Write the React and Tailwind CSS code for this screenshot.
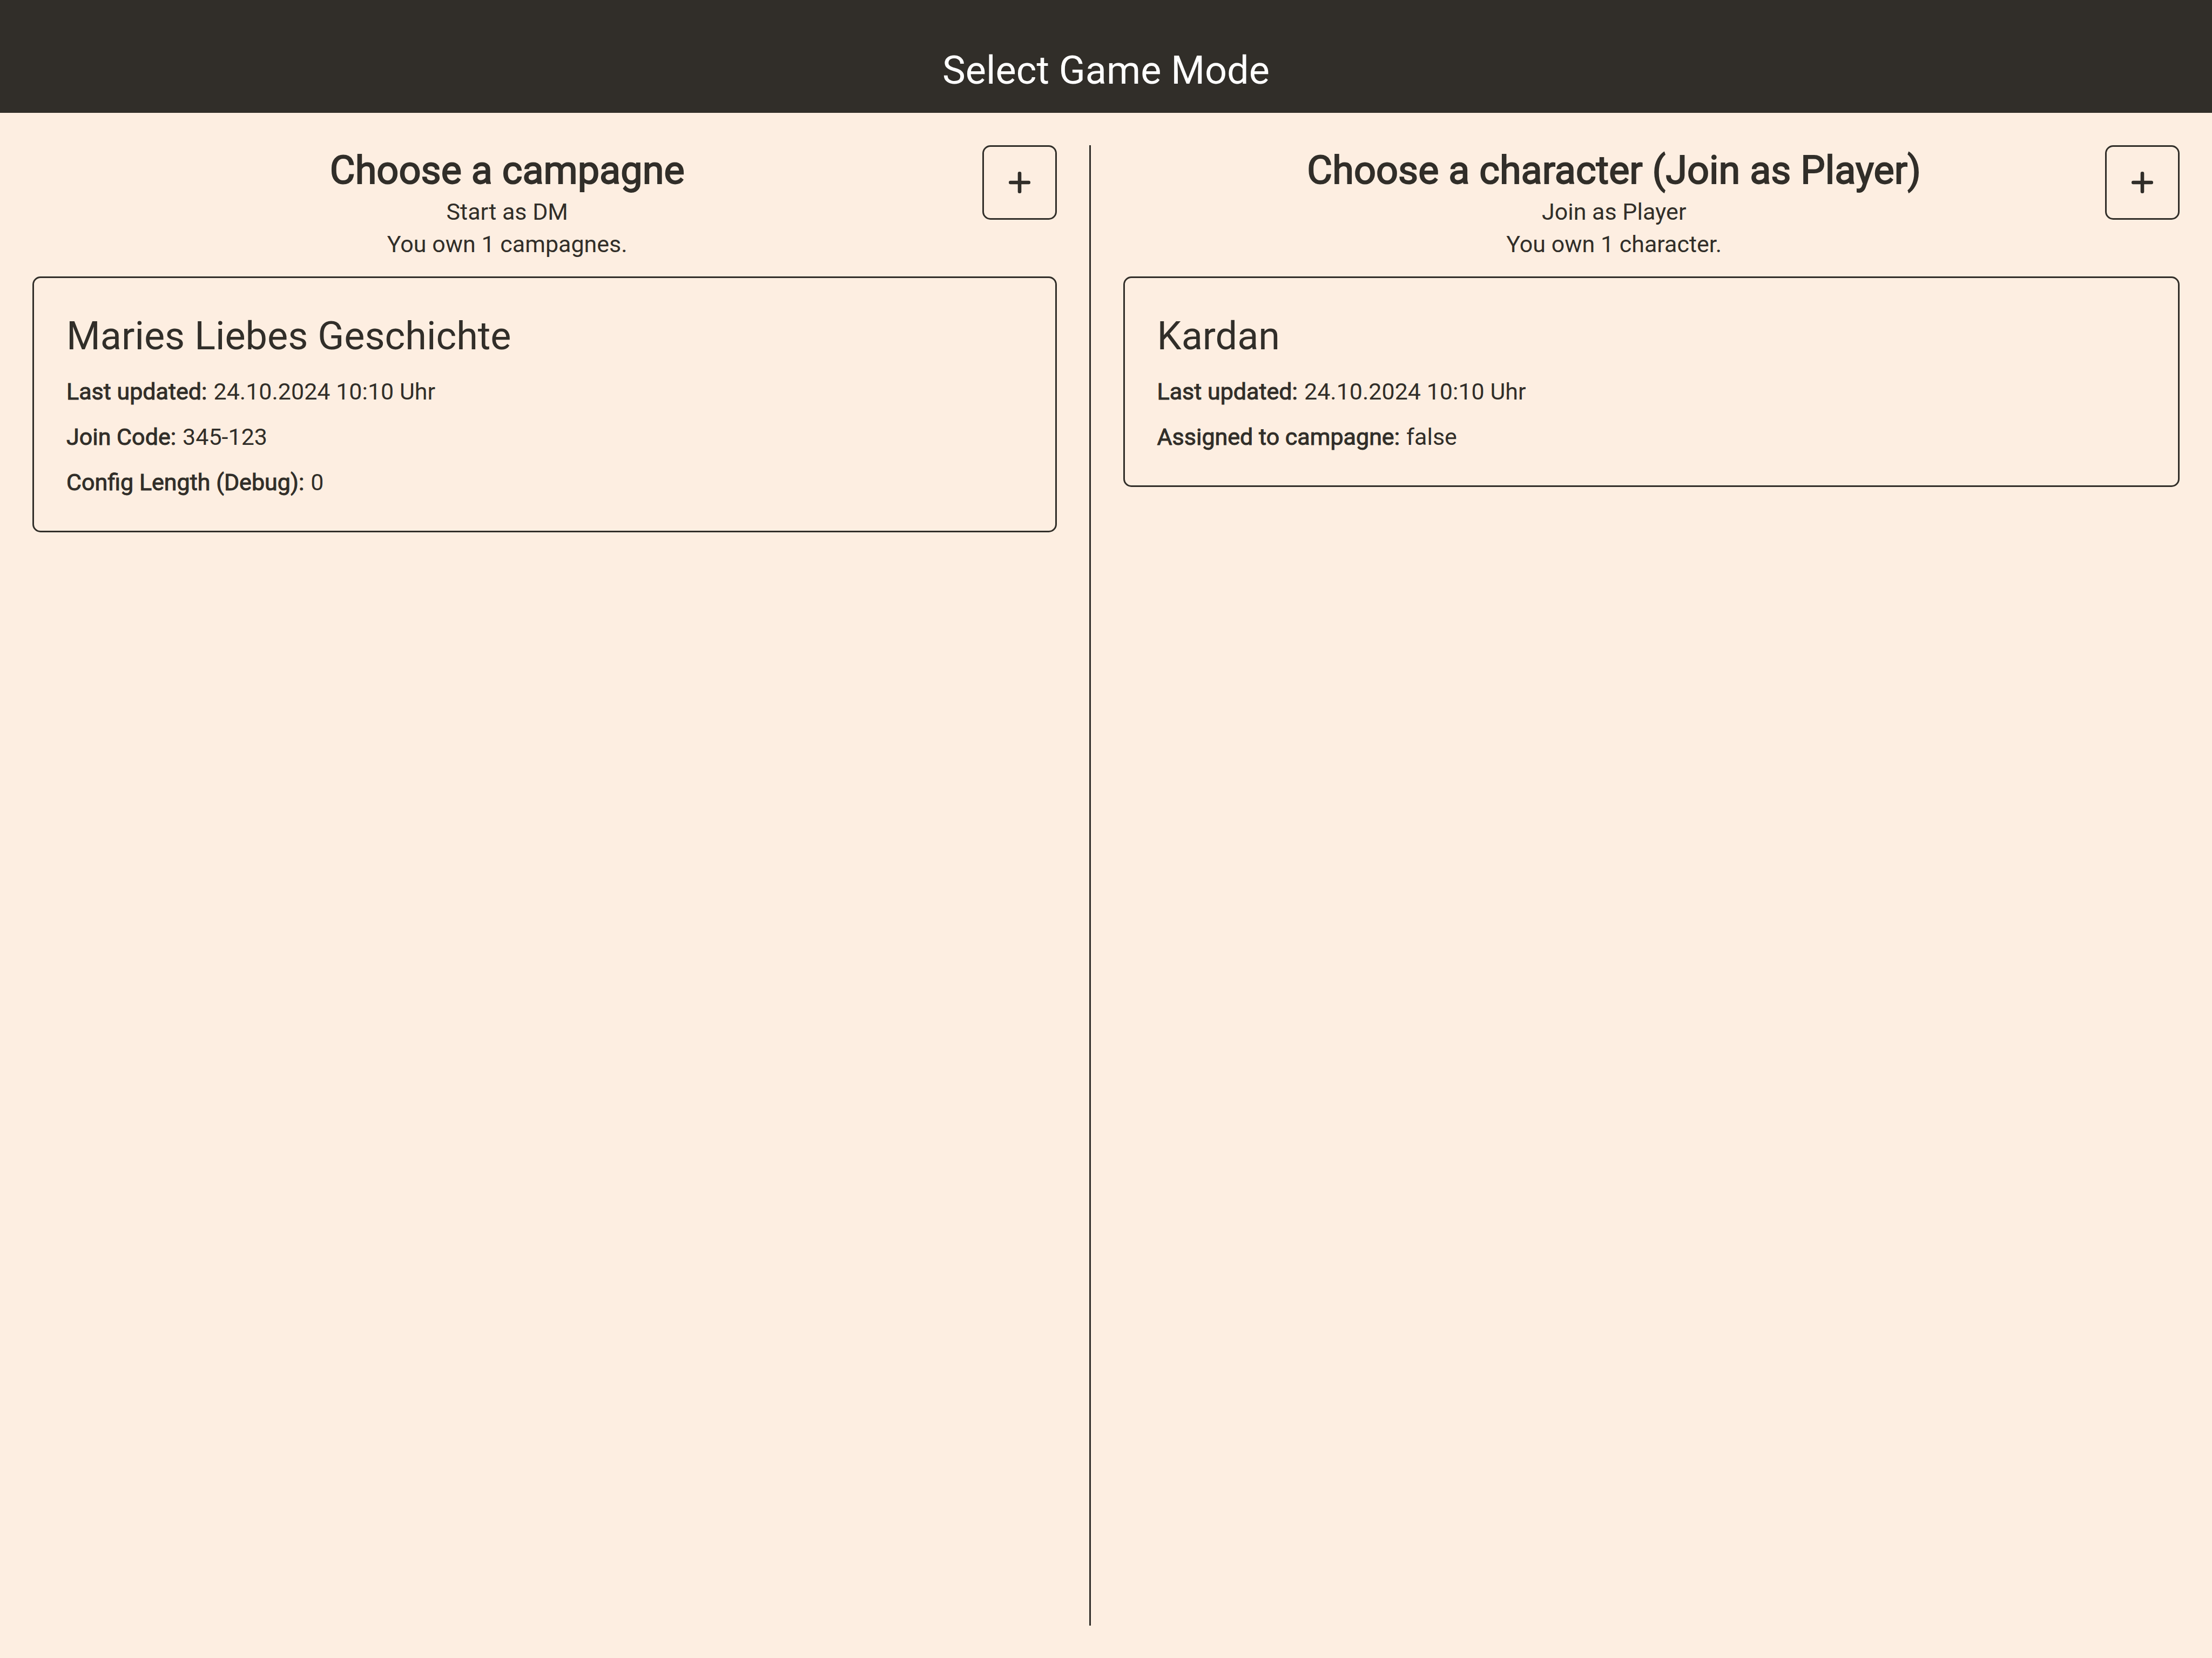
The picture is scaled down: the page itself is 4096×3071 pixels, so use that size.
function PlusIcon() {
  return (
    <svg className="size-10" viewBox="0 0 40 40" fill="currentColor" aria-hidden="true">
      <rect x="16.7" y="0" width="6.6" height="40" rx="3" />
      <rect x="0" y="16.7" width="40" height="6.6" rx="3" />
    </svg>
  );
}

function Entry({ title, rows }) {
  return (
    <article className="mt-[30px] flex flex-col gap-6 rounded-[15px] border-3 border-[#312e29] p-[60px]">
      <h3 className="text-[72px] leading-[96px]">{title}</h3>
      <dl className="flex flex-col gap-6 text-[43px] leading-[60px]">
        {rows.map(([label, value]) => (
          <div key={label} className="flex gap-3">
            <dt className="[-webkit-text-stroke:1px_currentColor]">{label}:</dt>
            <dd>{value}</dd>
          </div>
        ))}
      </dl>
    </article>
  );
}

function Column({ className, title, subtitle, count, addLabel, entry }) {
  return (
    <section className={className}>
      <div className="flex items-start">
        <div className="flex-1 text-center">
          <h2 className="text-[72px] leading-[93px] [-webkit-text-stroke:2px_currentColor]">{title}</h2>
          <p className="text-[43px] leading-[60px]">{subtitle}</p>
          <p className="text-[43px] leading-[60px]">{count}</p>
        </div>
        <button
          type="button"
          aria-label={addLabel}
          className="flex size-[138px] shrink-0 items-center justify-center rounded-[15px] border-3 border-[#312e29]"
        >
          <PlusIcon />
        </button>
      </div>
      <Entry {...entry} />
    </section>
  );
}

export default function App() {
  return (
    <div className="flex min-h-screen flex-col bg-[#fdeee1] font-['Roboto',sans-serif] text-[#312e29]">
      <header className="bg-[#312e29] pt-[84px] pb-8 text-center text-white">
        <h1 className="text-[72px] leading-[93px]">Select Game Mode</h1>
      </header>
      <main className="grid flex-1 grid-cols-[1fr_3px_1fr] py-[60px] pr-[60px]">
        <Column
          className="px-[60px]"
          title="Choose a campagne"
          subtitle="Start as DM"
          count="You own 1 campagnes."
          addLabel="Add campagne"
          entry={{
            title: "Maries Liebes Geschichte",
            rows: [
              ["Last updated", "24.10.2024 10:10 Uhr"],
              ["Join Code", "345-123"],
              ["Config Length (Debug)", "0"],
            ],
          }}
        />
        <div className="bg-[#312e29]" />
        <Column
          className="pl-[60px]"
          title="Choose a character (Join as Player)"
          subtitle="Join as Player"
          count="You own 1 character."
          addLabel="Add character"
          entry={{
            title: "Kardan",
            rows: [
              ["Last updated", "24.10.2024 10:10 Uhr"],
              ["Assigned to campagne", "false"],
            ],
          }}
        />
      </main>
    </div>
  );
}
